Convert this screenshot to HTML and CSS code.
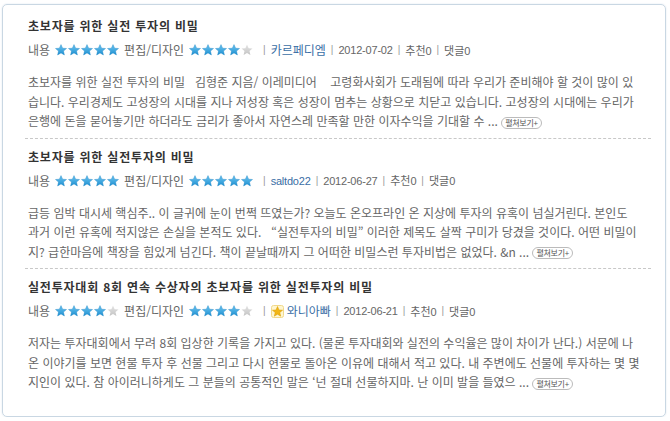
FILE: index.html
```html
<!DOCTYPE html>
<html lang="ko">
<head>
<meta charset="utf-8">
<link rel="stylesheet" href="styles.css">
</head>
<body>
<svg class="defs" width="0" height="0" aria-hidden="true">
  <defs>
    <linearGradient id="bg" x1="0" y1="0" x2="0" y2="1">
      <stop offset="0" stop-color="#6cc6f2"/>
      <stop offset="1" stop-color="#1e8fd0"/>
    </linearGradient>
    <linearGradient id="gg" x1="0" y1="0" x2="0" y2="1">
      <stop offset="0" stop-color="#e4e4e4"/>
      <stop offset="1" stop-color="#c4c4c4"/>
    </linearGradient>
    <symbol id="star" viewBox="0 0 12 12">
      <polygon points="6,0.6 7.6,4.2 11.5,4.5 8.5,7.1 9.4,11 6,8.9 2.6,11 3.5,7.1 0.5,4.5 4.4,4.2"/>
    </symbol>
  </defs>
</svg>
<div class="box">
  <div class="item">
    <div class="title">초보자를 위한 실전 투자의 비밀</div>
    <div class="meta">
      <span class="lbl">내용</span>
      <span class="stars"><svg class="s on"><use href="#star"/></svg><svg class="s on"><use href="#star"/></svg><svg class="s on"><use href="#star"/></svg><svg class="s on"><use href="#star"/></svg><svg class="s on"><use href="#star"/></svg></span>
      <span class="lbl">편집/디자인</span>
      <span class="stars"><svg class="s on"><use href="#star"/></svg><svg class="s on"><use href="#star"/></svg><svg class="s on"><use href="#star"/></svg><svg class="s on"><use href="#star"/></svg><svg class="s off"><use href="#star"/></svg></span>
      <span class="sep">|</span><span class="user">카르페디엠</span>
      <span class="sep">|</span><span class="num">2012-07-02</span>
      <span class="sep">|</span><span class="lbl sm">추천<span class="num">0</span></span>
      <span class="sep">|</span><span class="lbl sm">댓글<span class="num">0</span></span>
    </div>
    <p class="body">초보자를 위한 실전 투자의 비밀 &nbsp; 김형준 지음/ 이레미디어 &nbsp;&nbsp; 고령화사회가 도래됨에 따라 우리가 준비해야 할 것이 많이 있<br>습니다. 우리경제도 고성장의 시대를 지나 저성장 혹은 성장이 멈추는 상황으로 치닫고 있습니다. 고성장의 시대에는 우리가<br>은행에 돈을 묻어놓기만 하더라도 금리가 좋아서 자연스레 만족할 만한 이자수익을 기대할 수 ... <span class="more">펼쳐보기+</span></p>
  </div>
  <div class="item">
    <div class="title">초보자를 위한 실전투자의 비밀</div>
    <div class="meta">
      <span class="lbl">내용</span>
      <span class="stars"><svg class="s on"><use href="#star"/></svg><svg class="s on"><use href="#star"/></svg><svg class="s on"><use href="#star"/></svg><svg class="s on"><use href="#star"/></svg><svg class="s on"><use href="#star"/></svg></span>
      <span class="lbl">편집/디자인</span>
      <span class="stars"><svg class="s on"><use href="#star"/></svg><svg class="s on"><use href="#star"/></svg><svg class="s on"><use href="#star"/></svg><svg class="s on"><use href="#star"/></svg><svg class="s on"><use href="#star"/></svg></span>
      <span class="sep">|</span><span class="user num">saltdo22</span>
      <span class="sep">|</span><span class="num">2012-06-27</span>
      <span class="sep">|</span><span class="lbl sm">추천<span class="num">0</span></span>
      <span class="sep">|</span><span class="lbl sm">댓글<span class="num">0</span></span>
    </div>
    <p class="body">급등 임박 대시세 핵심주.. 이 글귀에 눈이 번쩍 뜨였는가? 오늘도 온오프라인 온 지상에 투자의 유혹이 넘실거린다. 본인도<br>과거 이런 유혹에 적지않은 손실을 본적도 있다. &nbsp; “실전투자의 비밀” 이러한 제목도 살짝 구미가 당겼을 것이다. 어떤 비밀이<br>지? 급한마음에 책장을 힘있게 넘긴다. 책이 끝날때까지 그 어떠한 비밀스런 투자비법은 없었다. &amp;n ... <span class="more">펼쳐보기+</span></p>
  </div>
  <div class="item last">
    <div class="title">실전투자대회 8회 연속 수상자의 초보자를 위한 실전투자의 비밀</div>
    <div class="meta">
      <span class="lbl">내용</span>
      <span class="stars"><svg class="s on"><use href="#star"/></svg><svg class="s on"><use href="#star"/></svg><svg class="s on"><use href="#star"/></svg><svg class="s on"><use href="#star"/></svg><svg class="s off"><use href="#star"/></svg></span>
      <span class="lbl">편집/디자인</span>
      <span class="stars"><svg class="s on"><use href="#star"/></svg><svg class="s on"><use href="#star"/></svg><svg class="s on"><use href="#star"/></svg><svg class="s on"><use href="#star"/></svg><svg class="s off"><use href="#star"/></svg></span>
      <span class="sep">|</span><svg class="badge" viewBox="0 0 13 13"><rect x="0.5" y="0.5" width="12" height="12" rx="2" fill="#fff6d0" stroke="#f1d98a"/><polygon points="6.5,1.5 8,5 11.6,5.2 8.8,7.5 9.7,11.2 6.5,9.2 3.3,11.2 4.2,7.5 1.4,5.2 5,5" fill="#f2b616" stroke="#d69a00" stroke-width="0.5"/></svg><span class="user">와니아빠</span>
      <span class="sep">|</span><span class="num">2012-06-21</span>
      <span class="sep">|</span><span class="lbl sm">추천<span class="num">0</span></span>
      <span class="sep">|</span><span class="lbl sm">댓글<span class="num">0</span></span>
    </div>
    <p class="body">저자는 투자대회에서 무려 8회 입상한 기록을 가지고 있다. (물론 투자대회와 실전의 수익율은 많이 차이가 난다.) 서문에 나<br>온 이야기를 보면 현물 투자 후 선물 그리고 다시 현물로 돌아온 이유에 대해서 적고 있다. 내 주변에도 선물에 투자하는 몇 몇<br>지인이 있다. 참 아이러니하게도 그 분들의 공통적인 말은 ‘넌 절대 선물하지마. 난 이미 발을 들였으 ... <span class="more">펼쳐보기+</span></p>
  </div>
</div>
</body>
</html>
```
FILE: styles.css
```css
html, body {
  margin: 0;
  padding: 0;
  background: #fff;
}
body {
  font-family: "Noto Sans CJK KR", "Noto Sans", sans-serif;
  font-size: 12px;
  color: #666;
}
.defs {
  position: absolute;
  width: 0;
  height: 0;
}
.box {
  margin: 4px 0 0 2px;
  width: 664px;
  height: 413px;
  border: 1px solid #c9d7e3;
  border-radius: 5px;
  box-shadow: 0 0 2px #dde6ee;
  padding: 0 14px 0 22px;
  box-sizing: border-box;
}
.item {
  padding: 9px 0 7px 3px;
  border-bottom: 1px dashed #c8c8c8;
}
.item:first-child {
  padding-top: 12px;
}
.item.last {
  border-bottom: none;
}
.title {
  font-weight: bold;
  color: #333;
  line-height: 18px;
  font-size: 12px;
  letter-spacing: 0.8px;
}
.meta {
  margin-top: 6px;
  line-height: 18px;
  height: 18px;
  display: flex;
  align-items: center;
  white-space: nowrap;
}
.lbl {
  color: #666;
}
.lbl.sm {
  font-size: 11px;
}
.stars {
  display: inline-flex;
  gap: 1px;
  margin: 0 5px 0 5px;
}
.s {
  width: 12px;
  height: 12px;
}
.s.on {
  fill: url(#bg);
  stroke: #1b84c4;
  stroke-width: 0.4;
}
.s.off {
  fill: url(#gg);
}
.sep {
  color: #999;
  margin: 0 5px 0 5px;
  font-family: "Liberation Sans", sans-serif;
  font-size: 10px;
}
.user {
  color: #3a6ea5;
}
.num {
  font-family: "Liberation Sans", sans-serif;
  font-size: 11px;
  letter-spacing: -0.2px;
}
.badge {
  width: 13px;
  height: 13px;
  margin-right: 3px;
}
.body {
  margin: 13px 0 0 0;
  line-height: 19.5px;
  white-space: nowrap;
  color: #666;
}
.more {
  display: inline-block;
  font-size: 8px;
  line-height: 10px;
  padding: 0 3px;
  border: 1px solid #bbb;
  border-radius: 6px;
  color: #555;
  vertical-align: middle;
  letter-spacing: -0.3px;
}
```
